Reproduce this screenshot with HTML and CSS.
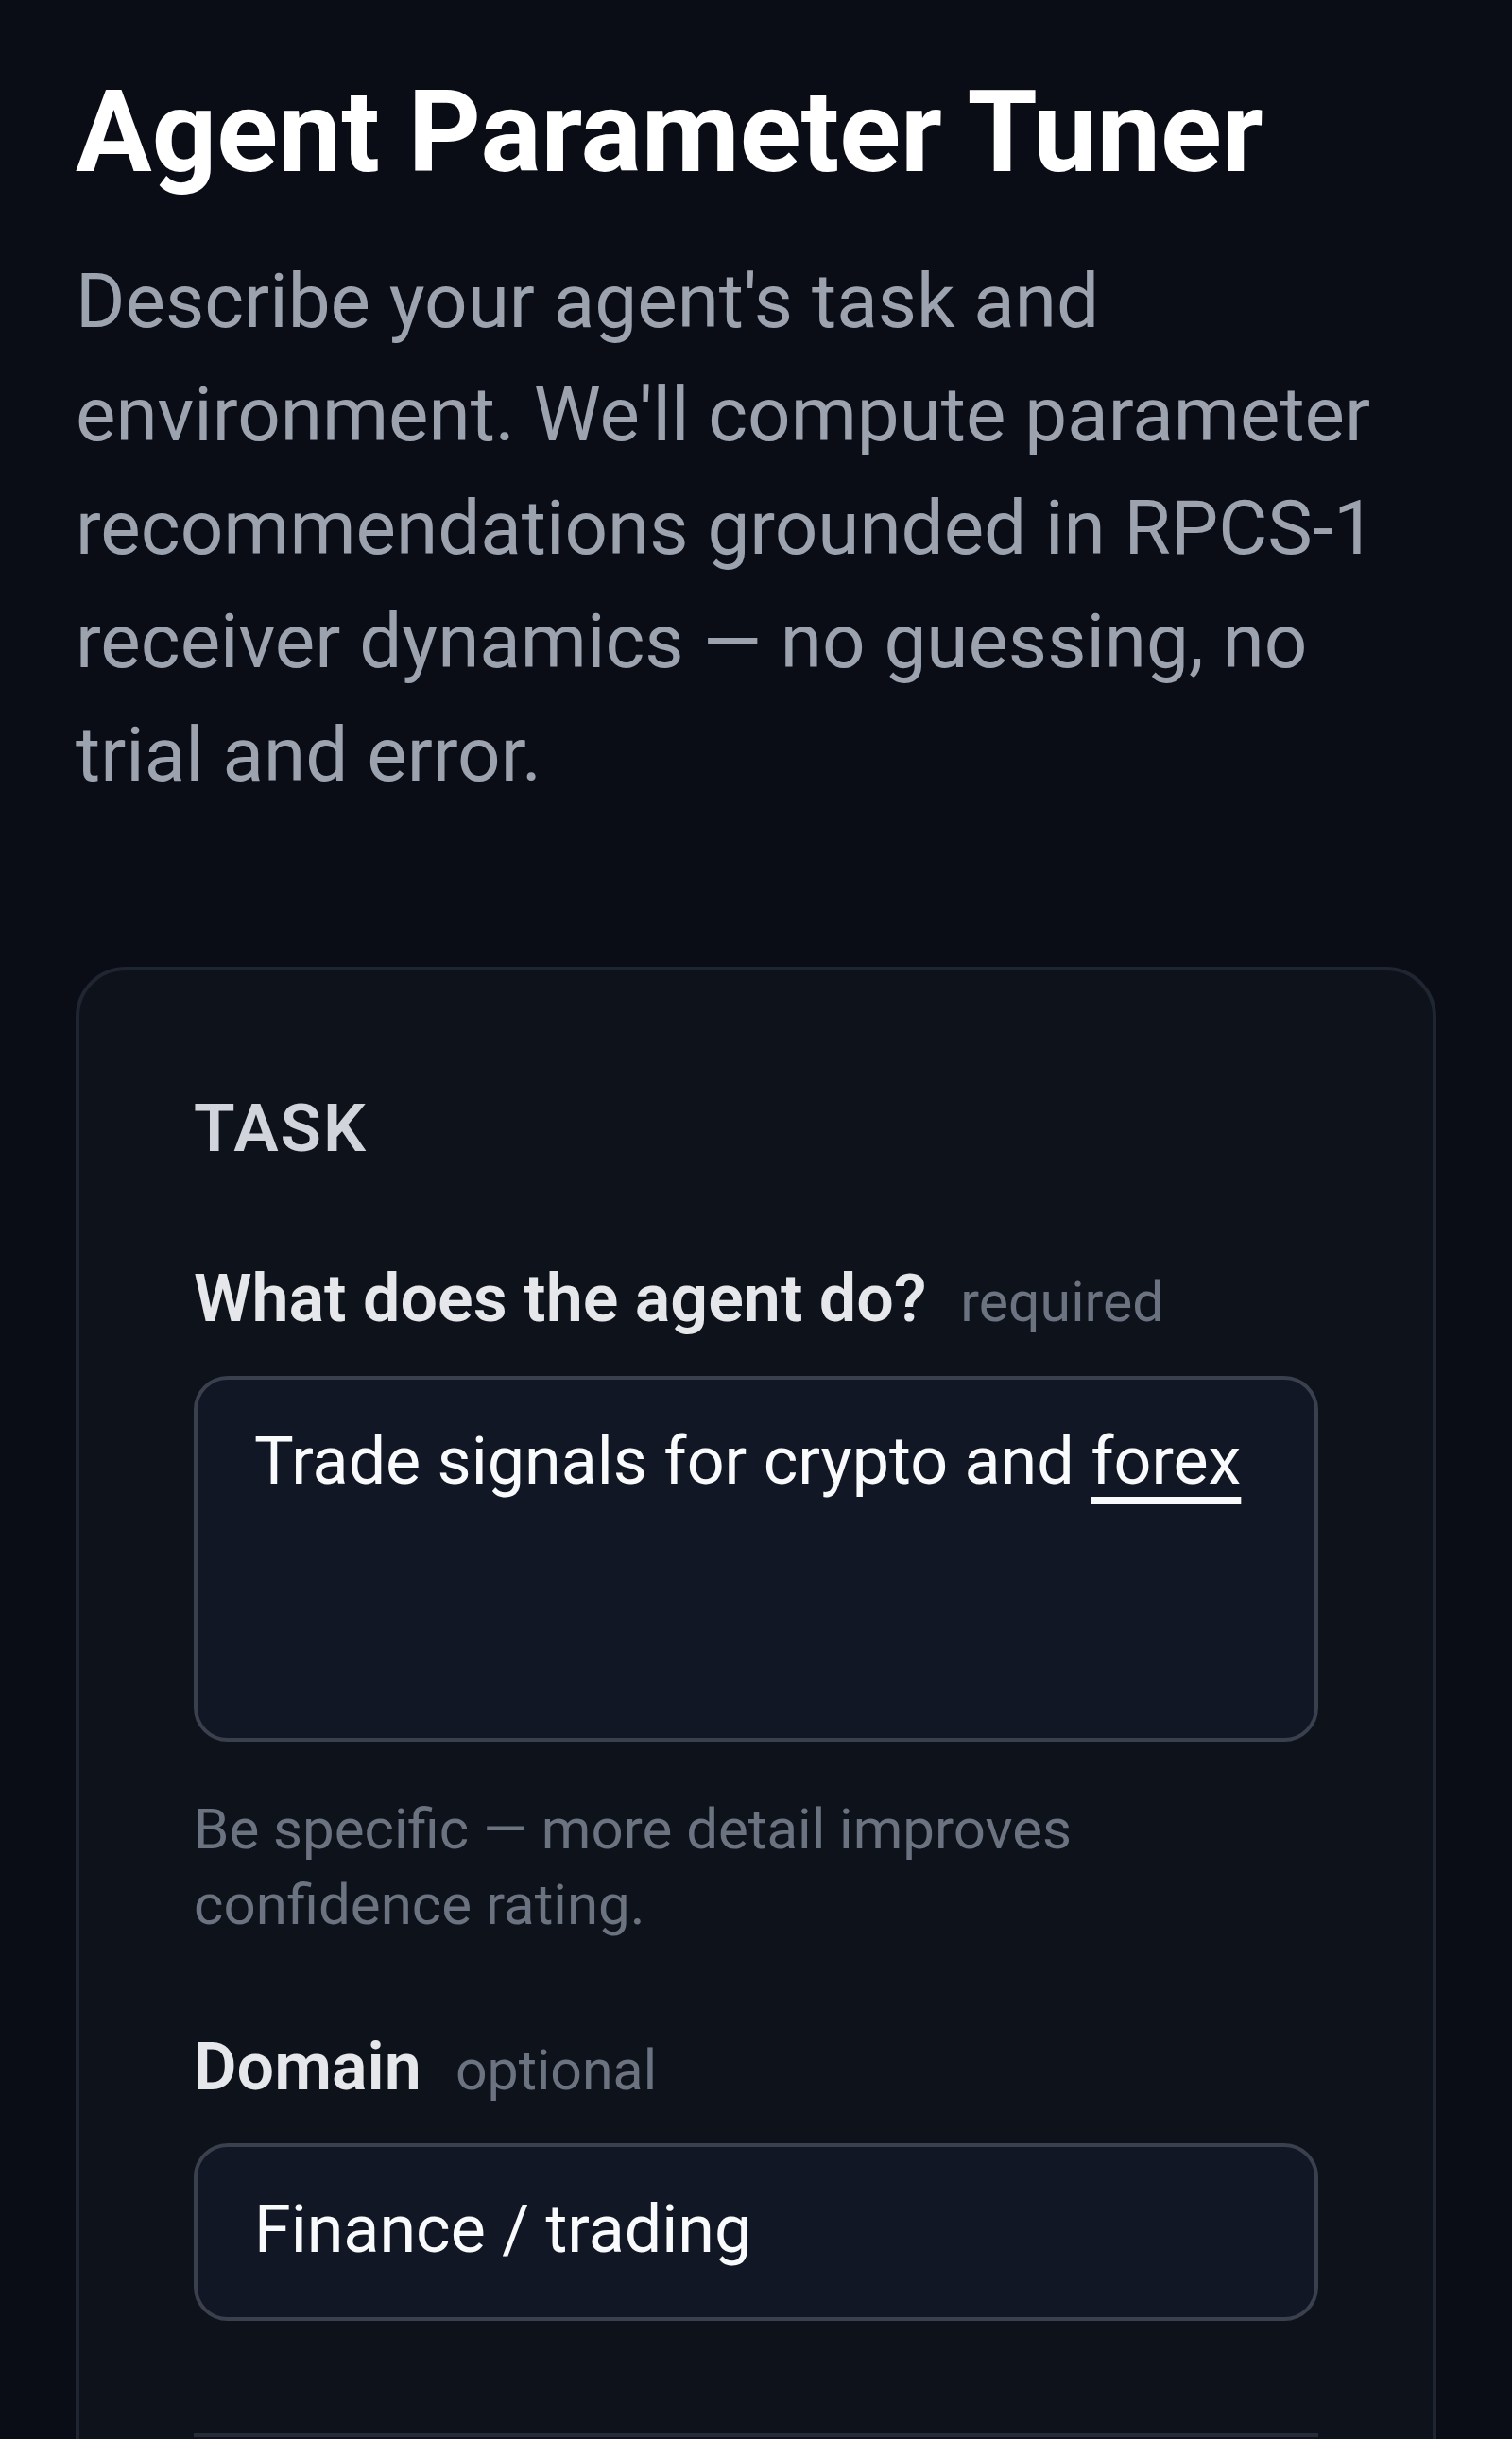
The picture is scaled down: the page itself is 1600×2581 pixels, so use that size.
FILE: index.html
```html
<!DOCTYPE html>
<html lang="en">
<head>
<meta charset="utf-8">
<title>Agent Parameter Tuner</title>
<link rel="stylesheet" href="styles.css">
</head>
<body>
<main class="page">
  <h1 class="title">Agent Parameter Tuner</h1>
  <p class="intro">Describe your agent's task and environment. We'll compute parameter recommendations grounded in RPCS-1 receiver dynamics — no guessing, no trial and error.</p>

  <section class="card">
    <h2 class="section-title">TASK</h2>

    <div class="field field-task">
      <label class="label">What does the agent do?<span class="hint">required</span></label>
      <div class="textarea">Trade signals for crypto and <span class="composing">forex</span></div>
      <p class="help">Be specific — more detail improves confidence rating.</p>
    </div>

    <div class="field field-domain">
      <label class="label">Domain<span class="hint">optional</span></label>
      <div class="input">Finance / trading</div>
    </div>

    <div class="divider"></div>
  </section>
</main>
</body>
</html>
```

FILE: styles.css
```css
html, body {
  margin: 0;
  padding: 0;
  background: #0a0d15;
}

body {
  font-family: Roboto, "Liberation Sans", sans-serif;
  color: #e5e7eb;
}

.page {
  padding: 67px 80px 0;
}

.title {
  margin: 0;
  font-size: 120px;
  line-height: 146px;
  font-weight: 700;
  color: #ffffff;
}

.intro {
  margin: 46px 0 0;
  max-width: 1410px;
  font-size: 80px;
  line-height: 120px;
  font-weight: 400;
  color: #9ca3af;
}

.card {
  margin-top: 164px;
  background: #0e121b;
  border: 4px solid #1f2531;
  border-radius: 53px;
  padding: 122px 121px 300px;
}

.section-title {
  margin: 0;
  font-size: 71px;
  line-height: 89px;
  font-weight: 600;
  letter-spacing: 2px;
  color: #d1d5db;
}

.field-task {
  margin-top: 92px;
}

.field-domain {
  margin-top: 87px;
}

.label {
  display: block;
  font-size: 70px;
  line-height: 89px;
  font-weight: 600;
  color: #e5e7eb;
}

.hint {
  margin-left: 36px;
  font-size: 59px;
  font-weight: 400;
  color: #6b7280;
}

.textarea,
.input {
  box-sizing: border-box;
  background: #111725;
  border: 4px solid #3a404d;
  border-radius: 36px;
  font-size: 70px;
  line-height: 107px;
  color: #f9fafb;
  padding-left: 60px;
  padding-right: 60px;
}

.textarea {
  margin-top: 34px;
  height: 387px;
  padding-top: 33px;
}

.composing {
  text-decoration: underline;
  text-decoration-thickness: 8px;
  text-underline-offset: 14px;
}

.help {
  margin: 53px 0 0;
  font-size: 60px;
  line-height: 80px;
  color: #6b7280;
}

.input {
  margin-top: 33px;
  height: 188px;
  padding-top: 34px;
}

.divider {
  margin-top: 119px;
  border-top: 4px solid #262c38;
}
```
